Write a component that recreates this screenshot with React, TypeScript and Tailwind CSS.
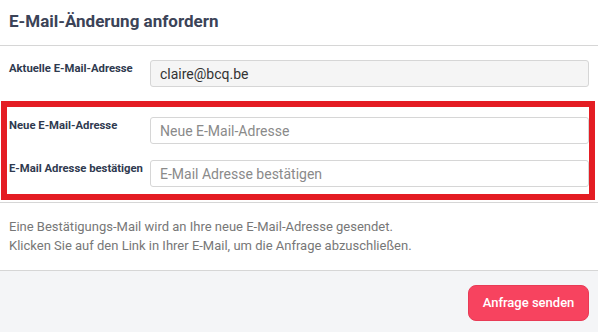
export default function App() {
  return (
    <div className="relative w-[598px] h-[332px] bg-white overflow-hidden font-['Roboto',sans-serif]">
      {/* Header */}
      <div className="h-[46px] pt-[9px] px-[9px] border-b border-[#d6d6d6]">
        <h1 className="text-[17px] leading-[24px] font-bold text-[#3b4357]">
          E-Mail-Änderung anfordern
        </h1>
      </div>

      {/* Form */}
      <div className="px-[9px] pt-[14px] pb-[15px] border-b border-[#d6d6d6]">
        <div className="flex items-start">
          <label className="w-[141px] pt-px text-[11.3px] leading-4 font-bold text-[#2f3a4f]">
            Aktuelle E-Mail-Adresse
          </label>
          <input
            readOnly
            value="claire@bcq.be"
            className="flex-1 h-[27px] px-[9px] text-[14px] text-[#333] bg-[#f5f5f5] border border-[#d6d6d6] rounded-[3px] outline-none"
          />
        </div>

        <div className="mt-[30px] flex flex-col gap-4">
          <div className="flex items-start">
            <label className="w-[141px] pt-px text-[11.3px] leading-4 font-bold text-[#2f3a4f]">
              Neue E-Mail-Adresse
            </label>
            <input
              placeholder="Neue E-Mail-Adresse"
              className="flex-1 h-[27px] px-[9px] text-[14px] text-[#333] placeholder:text-[#8a8a8a] bg-white border border-[#d6d6d6] rounded-[3px] outline-none"
            />
          </div>
          <div className="flex items-start">
            <label className="w-[141px] pt-px text-[11.3px] leading-4 font-bold text-[#2f3a4f]">
              E-Mail Adresse bestätigen
            </label>
            <input
              placeholder="E-Mail Adresse bestätigen"
              className="flex-1 h-[27px] px-[9px] text-[14px] text-[#333] placeholder:text-[#8a8a8a] bg-white border border-[#d6d6d6] rounded-[3px] outline-none"
            />
          </div>
        </div>
      </div>

      {/* Help text */}
      <div className="px-[9px] pt-[14px] pb-[15px] border-b border-[#d6d6d6] text-[13px] leading-[19px] text-[#777]">
        <p>Eine Bestätigungs-Mail wird an Ihre neue E-Mail-Adresse gesendet.</p>
        <p>Klicken Sie auf den Link in Ihrer E-Mail, um die Anfrage abzuschließen.</p>
      </div>

      {/* Footer */}
      <div className="h-full bg-[#f4f5f7] px-[9px] pt-[14px] flex justify-end items-start">
        <button className="w-[121px] h-[36px] rounded-[8px] bg-[#f7435f] border border-[#e83b56] text-white text-[13px] font-medium">
          Anfrage senden
        </button>
      </div>

      {/* Annotation highlight */}
      <div className="absolute left-px top-[101px] w-[594px] h-[99px] border-[6px] border-[#e41d23] pointer-events-none" />
    </div>
  );
}
